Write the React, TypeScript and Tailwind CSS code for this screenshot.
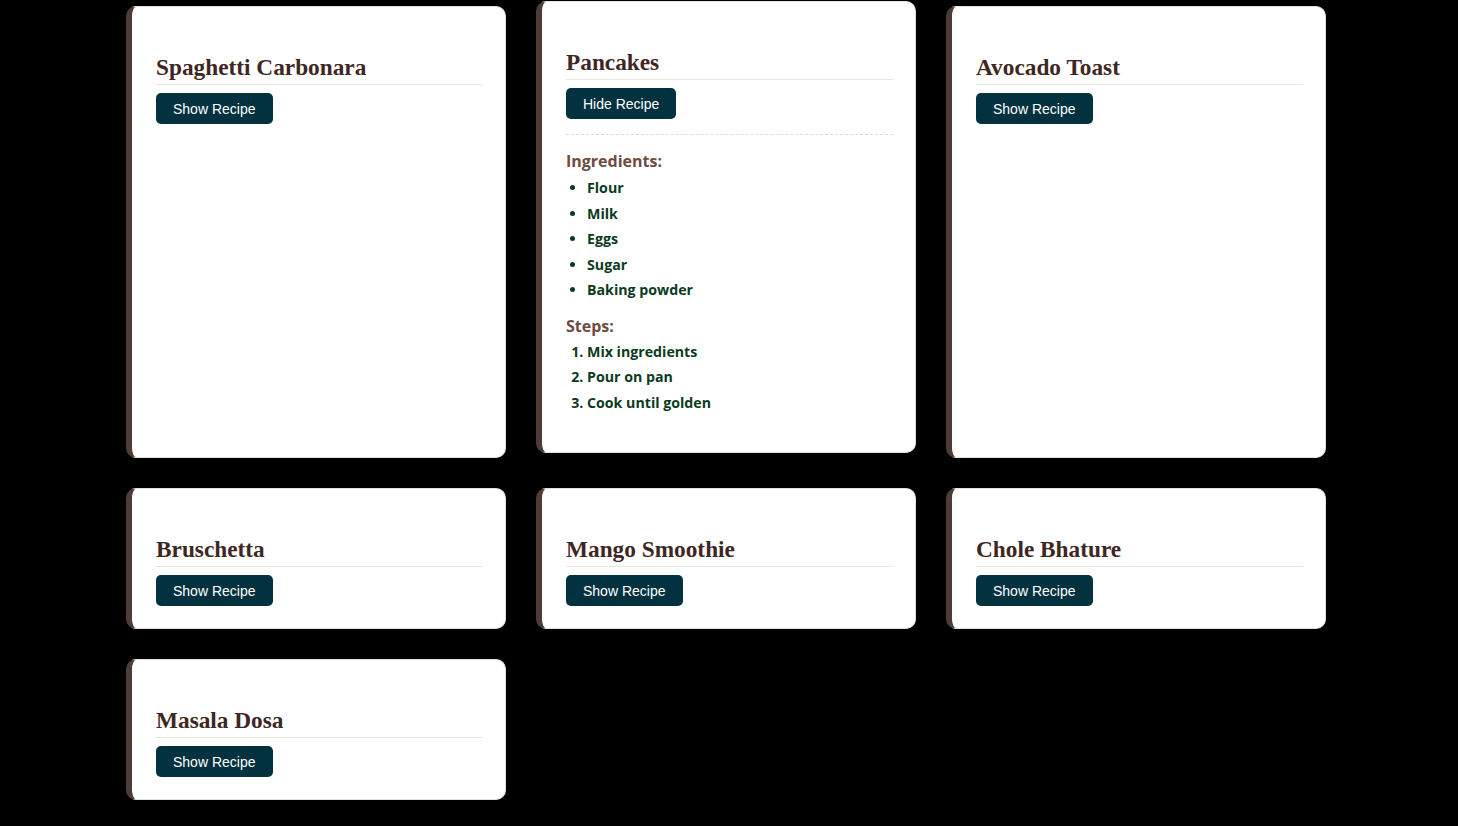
import React from "react";

type Recipe = { name: string; ingredients: string[]; steps: string[]; open?: boolean };

const recipes: Recipe[] = [
  { name: "Spaghetti Carbonara", ingredients: [], steps: [] },
  {
    name: "Pancakes",
    ingredients: ["Flour", "Milk", "Eggs", "Sugar", "Baking powder"],
    steps: ["Mix ingredients", "Pour on pan", "Cook until golden"],
    open: true,
  },
  { name: "Avocado Toast", ingredients: [], steps: [] },
  { name: "Bruschetta", ingredients: [], steps: [] },
  { name: "Mango Smoothie", ingredients: [], steps: [] },
  { name: "Chole Bhature", ingredients: [], steps: [] },
  { name: "Masala Dosa", ingredients: [], steps: [] },
];

function Card({ r }: { r: Recipe }) {
  return (
    <div
      className={
        "bg-white rounded-[10px] border border-[#e2e2e2] border-l-[6px] border-l-[#4e3d37] pl-[24px] pr-[22px] pt-[24px] pb-[22px] " +
        (r.open ? "-translate-y-[5px]" : "")
      }
    >
      <h2
        className="mt-[23px] pb-[3px] mb-[8px] border-b border-[#ebe5df] text-[23.3px] font-bold text-[#3e2723]"
        style={{ fontFamily: '"Liberation Serif", "Times New Roman", serif', lineHeight: "normal" }}
      >
        {r.name}
      </h2>
      <button
        className="bg-[#023140] text-white text-[14px] leading-[16px] px-[17px] py-[7.5px] rounded-[5px]"
        style={{ fontFamily: '"Liberation Sans", Arial, sans-serif' }}
      >
        {r.open ? "Hide Recipe" : "Show Recipe"}
      </button>
      {r.open && (
        <div
          className="mt-[15px] pt-[15px] border-t border-dashed border-[#dddddd]"
          style={{ fontFamily: '"Open Sans", "Noto Sans", sans-serif' }}
        >
          <h3 className="text-[16px] leading-[22px] font-bold text-[#6d4c41]">Ingredients:</h3>
          <ul className="list-disc pl-[21px] mt-[3px] text-[#0b3b1c] font-bold text-[14.2px] leading-[25.5px] marker:text-[#0b3b1c]">
            {r.ingredients.map((i) => (
              <li key={i}>{i}</li>
            ))}
          </ul>
          <h3 className="mt-[12px] text-[16px] leading-[22px] font-bold text-[#6d4c41]">Steps:</h3>
          <ol className="list-decimal pl-[21px] mt-[2px] mb-[15px] text-[#0b3b1c] font-bold text-[14.2px] leading-[25.5px]">
            {r.steps.map((s) => (
              <li key={s}>{s}</li>
            ))}
          </ol>
        </div>
      )}
    </div>
  );
}

export default function App() {
  return (
    <div className="min-h-[826px] bg-black pt-[6px] pb-[25px] pl-[126px]">
      <div className="grid grid-cols-[380px_380px_380px] gap-[30px] w-[1200px]">
        {recipes.map((r) => (
          <Card key={r.name} r={r} />
        ))}
      </div>
    </div>
  );
}
